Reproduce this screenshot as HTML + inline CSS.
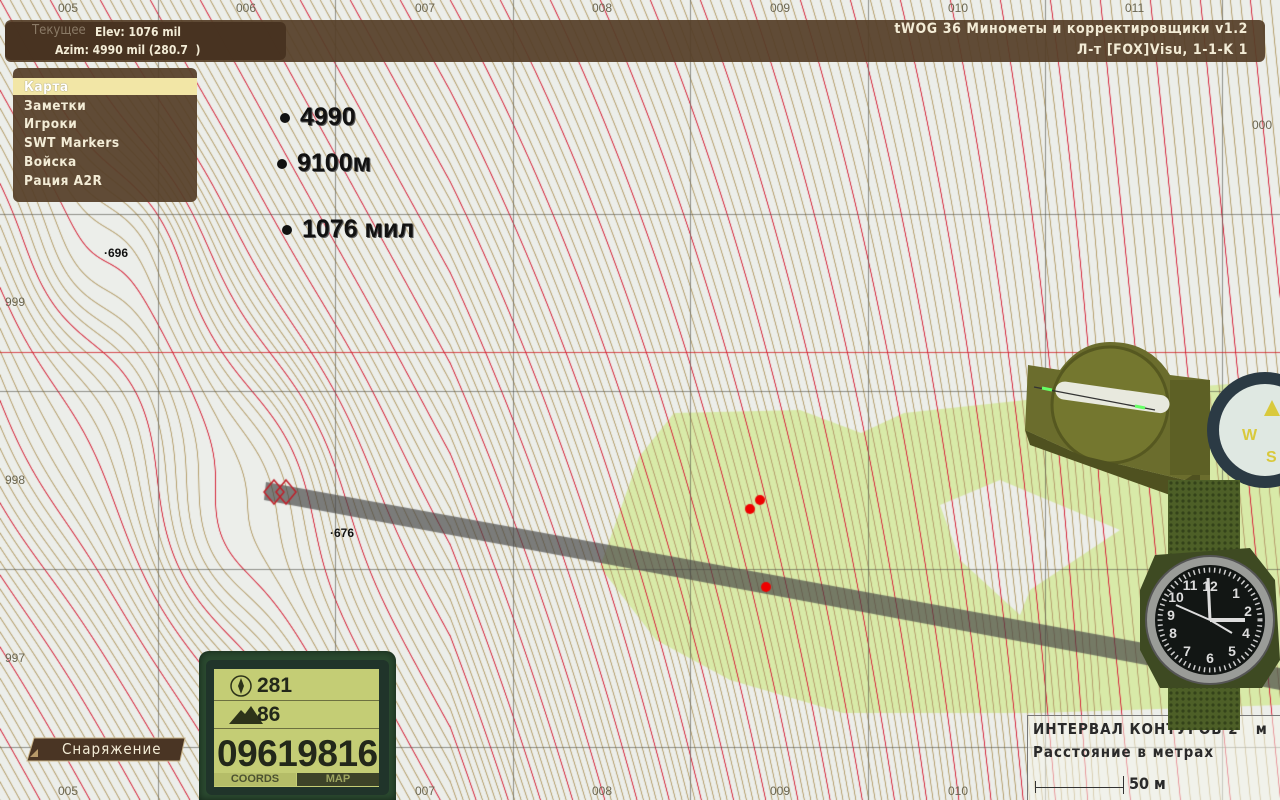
<!DOCTYPE html>
<html><head><meta charset="utf-8"><style>
*{margin:0;padding:0;box-sizing:border-box}
html,body{width:1280px;height:800px;overflow:hidden}
body{position:relative;background:#ebe7dc;font-family:"Liberation Sans","DejaVu Sans",sans-serif}
canvas{position:absolute;left:0;top:0}
.abs{position:absolute}
.lbl{position:absolute;font:12px "Liberation Sans Narrow","Liberation Sans",sans-serif;color:#6a6550}
.hud{font-family:"DejaVu Sans Condensed","DejaVu Sans",sans-serif;color:#f3ecd6}
.big{position:absolute;font:bold 25px "Liberation Sans Narrow","Liberation Sans",sans-serif;color:#111;text-shadow:1px 1px 0 #555;letter-spacing:0}
.big i{display:inline-block;width:10px;height:10px;border-radius:50%;background:#111;margin-right:10px;vertical-align:middle}
</style></head><body>
<canvas id="c" width="1280" height="800"></canvas>

<div class="lbl" style="left:58px;top:1px">005</div>
<div class="lbl" style="left:236px;top:1px">006</div>
<div class="lbl" style="left:415px;top:1px">007</div>
<div class="lbl" style="left:592px;top:1px">008</div>
<div class="lbl" style="left:770px;top:1px">009</div>
<div class="lbl" style="left:948px;top:1px">010</div>
<div class="lbl" style="left:1125px;top:1px">011</div>
<div class="lbl" style="left:58px;top:784px">005</div>
<div class="lbl" style="left:415px;top:784px">007</div>
<div class="lbl" style="left:592px;top:784px">008</div>
<div class="lbl" style="left:770px;top:784px">009</div>
<div class="lbl" style="left:948px;top:784px">010</div>
<div class="lbl" style="left:5px;top:295px">999</div>
<div class="lbl" style="left:5px;top:473px">998</div>
<div class="lbl" style="left:5px;top:651px">997</div>
<div class="lbl" style="left:1252px;top:118px">000</div>
<div class="abs" style="left:104px;top:246px;font:bold 12px 'Liberation Sans Narrow',sans-serif;color:#111">·696</div>
<div class="abs" style="left:330px;top:526px;font:bold 12px 'Liberation Sans Narrow',sans-serif;color:#111">·676</div>

<div class="abs" style="left:5px;top:20px;width:1260px;height:42px;background:rgba(85,62,40,.93);border-radius:6px"></div>
<div class="abs" style="left:5px;top:22px;width:281px;height:38px;background:rgba(70,50,32,.9);border-radius:6px"></div>
<div class="abs hud" style="left:32px;top:23px;font-size:13px;color:#8a7a66">Текущее</div>
<div class="abs hud" style="left:95px;top:25px;font-size:12px;font-weight:bold">Elev: 1076 mil</div>
<div class="abs hud" style="left:55px;top:43px;font-size:12px;font-weight:bold">Azim: 4990 mil (280.7 &nbsp;)</div>
<div class="abs hud" style="right:32px;top:21px;font-size:14px;font-weight:bold;text-align:right;letter-spacing:.6px">tWOG 36 Минометы и корректировщики v1.2</div>
<div class="abs hud" style="right:32px;top:42px;font-size:14px;font-weight:bold;text-align:right;letter-spacing:.6px">Л-т [FOX]Visu, 1-1-K 1</div>

<div class="abs" style="left:13px;top:68px;width:184px;height:134px;background:rgba(85,62,40,.93);border-radius:6px"></div>
<div class="abs" style="left:13px;top:78px;width:184px;height:17px;background:#f2e6a6"></div>
<div class="abs hud" style="left:24px;top:78px;font-size:13.5px;line-height:18.7px;font-weight:bold;letter-spacing:.5px">
<div style="color:#fff;text-shadow:0 0 1px #665">Карта</div><div>Заметки</div><div>Игроки</div><div>SWT Markers</div><div>Войска</div><div>Рация A2R</div></div>

<div class="big" style="left:280px;top:103px"><i></i>4990</div>
<div class="big" style="left:277px;top:149px"><i></i>9100м</div>
<div class="big" style="left:282px;top:215px"><i></i>1076 мил</div>

<svg class="abs" style="left:26px;top:737px" width="160" height="26"><polygon points="8,1 159,1 154,24 1,24" fill="#4a3524" stroke="#cbb58a" stroke-width="1"/><polygon points="4,20 12,12 12,20" fill="#b89a6a"/></svg>
<div class="abs hud" style="left:62px;top:740px;font-size:15px;letter-spacing:1px">Снаряжение</div>

<div class="abs" style="left:199px;top:651px;width:197px;height:149px;background:#2b4a30;border-radius:10px 10px 0 0;box-shadow:inset 0 0 8px #142418"></div>
<div class="abs" style="left:206px;top:660px;width:183px;height:135px;background:#20342a;border-radius:6px"></div>
<div class="abs" style="left:214px;top:669px;width:165px;height:118px;background:#c4cd75"></div>
<div class="abs" style="left:214px;top:700px;width:165px;height:1px;background:#6d7040"></div>
<div class="abs" style="left:214px;top:728px;width:165px;height:1px;background:#6d7040"></div>
<svg class="abs" style="left:229px;top:674px" width="50" height="52"><circle cx="12" cy="12" r="10" fill="none" stroke="#2d3319" stroke-width="1.5"/><polygon points="12,4 15,12 12,20 9,12" fill="#2d3319"/><polygon points="0,50 12,36 16,40 22,32 34,50" fill="#2d3319"/></svg>
<div class="abs" style="left:257px;top:674px;font:bold 21px 'Liberation Sans Narrow','Liberation Sans',sans-serif;color:#23281a">281</div>
<div class="abs" style="left:257px;top:703px;font:bold 21px 'Liberation Sans Narrow','Liberation Sans',sans-serif;color:#23281a">86</div>
<div class="abs" style="left:217px;top:733px;font:bold 37px 'Liberation Sans Narrow','Liberation Sans',sans-serif;color:#23281a;letter-spacing:-.5px">09619816</div>
<div class="abs" style="left:214px;top:773px;width:82px;height:13px;background:#b5bd68;font:bold 11px 'Liberation Sans',sans-serif;color:#4c5230;text-align:center;line-height:13px">COORDS</div>
<div class="abs" style="left:297px;top:773px;width:82px;height:13px;background:#3d4328;font:bold 11px 'Liberation Sans',sans-serif;color:#9ea660;text-align:center;line-height:13px">MAP</div>

<div class="abs" style="left:1027px;top:715px;width:260px;height:90px;background:rgba(245,245,235,.55);border:1px solid #777"></div>
<div class="abs" style="left:1033px;top:720px;font:bold 15px 'DejaVu Sans Condensed','DejaVu Sans',sans-serif;color:#2a2a2a;letter-spacing:1px">ИНТЕРВАЛ КОНТУРОВ 2 &nbsp; м</div>
<div class="abs" style="left:1033px;top:743px;font:bold 15px 'DejaVu Sans Condensed','DejaVu Sans',sans-serif;color:#2a2a2a;letter-spacing:1px">Расстояние в метрах</div>
<div class="abs" style="left:1035px;top:787px;width:88px;height:1px;background:#333"></div>
<div class="abs" style="left:1035px;top:781px;width:1px;height:12px;background:#333"></div>
<div class="abs" style="left:1123px;top:776px;width:1px;height:18px;background:#333"></div>
<div class="abs" style="left:1129px;top:774px;font:bold 16px 'DejaVu Sans Condensed','DejaVu Sans',sans-serif;color:#2a2a2a">50 м</div>

<svg class="abs" style="left:1000px;top:330px" width="280" height="470">
<defs><pattern id="wv" width="6" height="6" patternUnits="userSpaceOnUse"><rect width="6" height="6" fill="#4d5f27"/><circle cx="3" cy="3" r="1.6" fill="#34431a"/></pattern></defs>
<path d="M28,35 L60,40 Q80,12 110,12 Q150,12 170,45 L210,50 L210,170 L185,150 L80,125 L25,100 Z" fill="#6b6d2d"/>
<circle cx="110" cy="75" r="58" fill="#74772f" stroke="#565820" stroke-width="3"/>
<rect x="55" y="58" width="115" height="18" rx="9" fill="#e8e9de" transform="rotate(8 110 67)"/>
<line x1="34" y1="57" x2="155" y2="80" stroke="#333" stroke-width="1.3"/>
<line x1="42" y1="58" x2="52" y2="60" stroke="#6f6" stroke-width="3"/>
<line x1="135" y1="76" x2="145" y2="78" stroke="#6f6" stroke-width="3"/>
<path d="M25,100 L80,125 L185,150 L200,140 L200,160 L170,165 L30,115 Z" fill="#4f5120"/>
<rect x="170" y="50" width="40" height="95" fill="#5d6025"/>
<circle cx="265" cy="100" r="58" fill="#2b3a44"/>
<circle cx="265" cy="100" r="46" fill="#dfe8e2"/>
<text x="242" y="110" font-family="Liberation Sans" font-weight="bold" font-size="16" fill="#d9c93c">W</text>
<text x="266" y="132" font-family="Liberation Sans" font-weight="bold" font-size="16" fill="#d9c93c">S</text>
<polygon points="272,70 280,86 264,86" fill="#d9c93c"/>
<rect x="168" y="150" width="72" height="250" fill="url(#wv)"/>
<path d="M155,225 L250,218 L275,250 L280,330 L262,358 L160,358 L140,320 L140,260 Z" fill="#3e4a22"/>
<circle cx="210" cy="290" r="64" fill="#9a9c98" stroke="#555" stroke-width="2"/>
<circle cx="210" cy="290" r="55" fill="#121614"/>
<circle cx="210" cy="290" r="50" fill="none" stroke="#ccc" stroke-width="5" stroke-dasharray="1.5 3.7"/>
<g font-family="Liberation Sans" font-weight="bold" font-size="14" fill="#ddd" text-anchor="middle">
<text x="210" y="261">12</text><text x="236" y="268">1</text><text x="248" y="286">2</text><text x="246" y="308">4</text><text x="232" y="326">5</text><text x="210" y="333">6</text><text x="187" y="326">7</text><text x="173" y="308">8</text><text x="171" y="290">9</text><text x="176" y="272">10</text><text x="190" y="260">11</text></g>
<line x1="210" y1="290" x2="208" y2="248" stroke="#ddd" stroke-width="3"/>
<line x1="210" y1="290" x2="245" y2="290" stroke="#ddd" stroke-width="4"/>
<line x1="210" y1="290" x2="176" y2="275" stroke="#ddd" stroke-width="2"/>
<line x1="210" y1="290" x2="232" y2="303" stroke="#ddd" stroke-width="2"/>
</svg>

<script>
(function(){
var c=document.getElementById('c'),g=c.getContext('2d'),W=1280,H=800;
g.fillStyle='#eceeea';g.fillRect(0,0,W,H);
g.fillStyle='#d8eaa8';g.beginPath();
[[600,567],[639,457],[674,413],[800,410],[861,433],[904,413],[1026,400],[1280,380],[1280,705],[1035,713],[843,713],[730,680],[656,640]].forEach(function(p,i){i?g.lineTo(p[0],p[1]):g.moveTo(p[0],p[1])});g.fill();
g.fillStyle='#eceeea';g.beginPath();
[[940,505],[1000,480],[1120,530],[1030,590],[1020,615],[960,560]].forEach(function(p,i){i?g.lineTo(p[0],p[1]):g.moveTo(p[0],p[1])});g.fill();
function base(x,y){var t=Math.max(0,Math.min(1,(x-450)/650));var k=0.55-0.45*t;return x-k*y;}
function flat(v,x,y,cx,cy,sx,sy,amt){var m=Math.exp(-(Math.pow((x-cx)/sx,2)+Math.pow((y-cy)/sy,2)));var c0=base(cx,cy);return v-(v-c0)*amt*m;}
function h(x,y){
 var v=base(x,y);
 v=flat(v,x,y,110,260,70,90,0.9);
 v=flat(v,x,y,240,500,85,120,0.9);
 v=flat(v,x,y,80,420,120,150,0.45);
 return v;}
var img=g.getImageData(0,0,W,H),d=img.data,S=10;
for(var y=0;y<H;y++)for(var x=0;x<W;x++){
 var v=h(x,y),gx=h(x+1,y)-v,gy=h(x,y+1)-v,gm=Math.sqrt(gx*gx+gy*gy)+1e-6;
 var n=v/S,r=Math.round(n),dist=Math.abs(n-r)*S/gm;
 if(dist<0.8){var a=1-dist/0.8;a=Math.min(1,a*1.3);var i=(y*W+x)*4;
  var red=(((r%5)+5)%5)==0;var cr=red?[214,40,60]:[182,160,110];
  d[i]=d[i]*(1-a)+cr[0]*a;d[i+1]=d[i+1]*(1-a)+cr[1]*a;d[i+2]=d[i+2]*(1-a)+cr[2]*a;}}
g.putImageData(img,0,0);
g.strokeStyle='rgba(80,80,70,.6)';g.lineWidth=1;
[158,335,513,690,868,1045,1222].forEach(function(x){g.beginPath();g.moveTo(x+.5,0);g.lineTo(x+.5,H);g.stroke()});
[214,391,569,747].forEach(function(y){g.beginPath();g.moveTo(0,y+.5);g.lineTo(W,y+.5);g.stroke()});
g.strokeStyle='rgba(210,30,40,.8)';g.beginPath();g.moveTo(0,352.5);g.lineTo(W,352.5);g.stroke();
g.fillStyle='rgba(70,70,70,.68)';g.beginPath();g.moveTo(266,482);g.lineTo(1280,668);g.lineTo(1280,690);g.lineTo(264,500);g.fill();
g.strokeStyle='#c0202a';g.lineWidth=1.5;
[[274,492],[286,492]].forEach(function(p){g.beginPath();g.moveTo(p[0],p[1]-12);g.lineTo(p[0]+10,p[1]);g.lineTo(p[0],p[1]+12);g.lineTo(p[0]-10,p[1]);g.closePath();g.stroke()});
g.fillStyle='#e00';[[760,500],[750,509],[766,587]].forEach(function(p){g.beginPath();g.arc(p[0],p[1],5,0,7);g.fill()});
})();
</script>
</body></html>
